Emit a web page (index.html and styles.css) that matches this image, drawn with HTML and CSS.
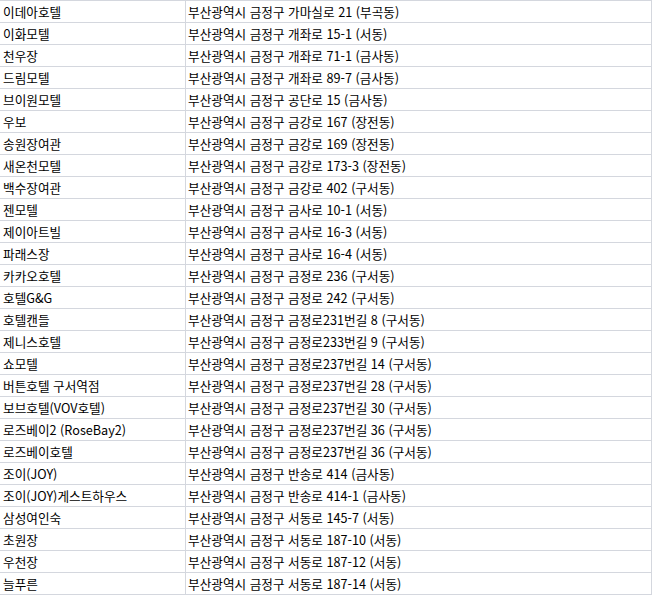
FILE: index.html
```html
<!DOCTYPE html>
<html lang="ko">
<head>
<meta charset="utf-8">
<link rel="stylesheet" href="styles.css">
</head>
<body>
<div class="sheet">
<div class="row"><div class="cell name">이데아호텔</div><div class="cell addr">부산광역시 금정구 가마실로 21 (부곡동)</div></div>
<div class="row"><div class="cell name">이화모텔</div><div class="cell addr">부산광역시 금정구 개좌로 15-1 (서동)</div></div>
<div class="row"><div class="cell name">천우장</div><div class="cell addr">부산광역시 금정구 개좌로 71-1 (금사동)</div></div>
<div class="row"><div class="cell name">드림모텔</div><div class="cell addr">부산광역시 금정구 개좌로 89-7 (금사동)</div></div>
<div class="row"><div class="cell name">브이원모텔</div><div class="cell addr">부산광역시 금정구 공단로 15 (금사동)</div></div>
<div class="row"><div class="cell name">우보</div><div class="cell addr">부산광역시 금정구 금강로 167 (장전동)</div></div>
<div class="row"><div class="cell name">송원장여관</div><div class="cell addr">부산광역시 금정구 금강로 169 (장전동)</div></div>
<div class="row"><div class="cell name">새온천모텔</div><div class="cell addr">부산광역시 금정구 금강로 173-3 (장전동)</div></div>
<div class="row"><div class="cell name">백수장여관</div><div class="cell addr">부산광역시 금정구 금강로 402 (구서동)</div></div>
<div class="row"><div class="cell name">젠모텔</div><div class="cell addr">부산광역시 금정구 금사로 10-1 (서동)</div></div>
<div class="row"><div class="cell name">제이아트빌</div><div class="cell addr">부산광역시 금정구 금사로 16-3 (서동)</div></div>
<div class="row"><div class="cell name">파래스장</div><div class="cell addr">부산광역시 금정구 금사로 16-4 (서동)</div></div>
<div class="row"><div class="cell name">카카오호텔</div><div class="cell addr">부산광역시 금정구 금정로 236 (구서동)</div></div>
<div class="row"><div class="cell name">호텔G&amp;G</div><div class="cell addr">부산광역시 금정구 금정로 242 (구서동)</div></div>
<div class="row"><div class="cell name">호텔캔들</div><div class="cell addr">부산광역시 금정구 금정로231번길 8 (구서동)</div></div>
<div class="row"><div class="cell name">제니스호텔</div><div class="cell addr">부산광역시 금정구 금정로233번길 9 (구서동)</div></div>
<div class="row"><div class="cell name">쇼모텔</div><div class="cell addr">부산광역시 금정구 금정로237번길 14 (구서동)</div></div>
<div class="row"><div class="cell name">버튼호텔 구서역점</div><div class="cell addr">부산광역시 금정구 금정로237번길 28 (구서동)</div></div>
<div class="row"><div class="cell name">보브호텔(VOV호텔)</div><div class="cell addr">부산광역시 금정구 금정로237번길 30 (구서동)</div></div>
<div class="row"><div class="cell name">로즈베이2 (RoseBay2)</div><div class="cell addr">부산광역시 금정구 금정로237번길 36 (구서동)</div></div>
<div class="row"><div class="cell name">로즈베이호텔</div><div class="cell addr">부산광역시 금정구 금정로237번길 36 (구서동)</div></div>
<div class="row"><div class="cell name">조이(JOY)</div><div class="cell addr">부산광역시 금정구 반송로 414 (금사동)</div></div>
<div class="row"><div class="cell name">조이(JOY)게스트하우스</div><div class="cell addr">부산광역시 금정구 반송로 414-1 (금사동)</div></div>
<div class="row"><div class="cell name">삼성여인숙</div><div class="cell addr">부산광역시 금정구 서동로 145-7 (서동)</div></div>
<div class="row"><div class="cell name">초원장</div><div class="cell addr">부산광역시 금정구 서동로 187-10 (서동)</div></div>
<div class="row"><div class="cell name">우천장</div><div class="cell addr">부산광역시 금정구 서동로 187-12 (서동)</div></div>
<div class="row"><div class="cell name">늘푸른</div><div class="cell addr">부산광역시 금정구 서동로 187-14 (서동)</div></div>
</div>
</body>
</html>
```
FILE: styles.css
```css
html, body {
  margin: 0;
  padding: 0;
  background: #ffffff;
}
.sheet {
  width: 652px;
  border-top: 1px solid #d4d7de;
  font-family: "Noto Sans CJK KR", "Noto Sans", sans-serif;
  font-size: 12.65px;
  color: #000000;
}
.row {
  display: grid;
  grid-template-columns: 186px 466px;
  height: 21px;
  border-bottom: 1px solid #d4d7de;
}
.cell {
  border-right: 1px solid #d4d7de;
  line-height: 21px;
  padding-left: 3px;
  white-space: nowrap;
  overflow: hidden;
}
.addr {
  padding-left: 2px;
}
```
